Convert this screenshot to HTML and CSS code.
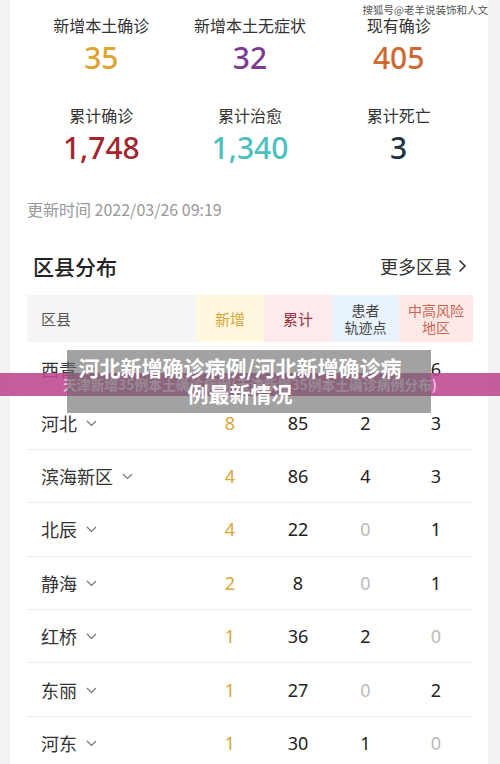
FILE: index.html
```html
<!DOCTYPE html>
<html lang="zh-CN">
<head>
<meta charset="utf-8">
<title>河北新增确诊病例</title>
<link rel="stylesheet" href="styles.css">
</head>
<body>
<div class="page">
  <div class="watermark">搜狐号@老羊说装饰和人文</div>
  <div class="card">
    <div class="stats">
      <div class="stat"><div class="label">新增本土确诊</div><div class="num c-gold">35</div></div>
      <div class="stat"><div class="label">新增本土无症状</div><div class="num c-purple">32</div></div>
      <div class="stat"><div class="label">现有确诊</div><div class="num c-orange">405</div></div>
      <div class="stat"><div class="label">累计确诊</div><div class="num c-red">1,748</div></div>
      <div class="stat"><div class="label">累计治愈</div><div class="num c-teal">1,340</div></div>
      <div class="stat"><div class="label">累计死亡</div><div class="num c-navy">3</div></div>
    </div>
    <div class="update">更新时间 2022/03/26 09:19</div>
    <div class="section-head">
      <div class="section-title">区县分布</div>
      <div class="more">更多区县 <svg class="more-arrow" width="9" height="14" viewBox="0 0 9 14"><polyline points="1.5,1.5 7,7 1.5,12.5" fill="none" stroke="#333" stroke-width="1.6"/></svg></div>
    </div>
    <div class="table">
      <div class="thead">
        <div class="th th-name">区县</div>
        <div class="th th-new">新增</div>
        <div class="th th-total">累计</div>
        <div class="th th-track">患者<br>轨迹点</div>
        <div class="th th-risk">中高风险<br>地区</div>
      </div>
      <div class="row">
        <div class="td name">西青<svg class="chev" width="11" height="7" viewBox="0 0 11 7"><polyline points="1,1 5.5,5.5 10,1" fill="none" stroke="#777" stroke-width="1.2"/></svg></div>
        <div class="td v-new"></div><div class="td"></div><div class="td"></div><div class="td">6</div>
      </div>
      <div class="row">
        <div class="td name">河北<svg class="chev" width="11" height="7" viewBox="0 0 11 7"><polyline points="1,1 5.5,5.5 10,1" fill="none" stroke="#777" stroke-width="1.2"/></svg></div>
        <div class="td v-new">8</div><div class="td">85</div><div class="td">2</div><div class="td">3</div>
      </div>
      <div class="row">
        <div class="td name">滨海新区<svg class="chev" width="11" height="7" viewBox="0 0 11 7"><polyline points="1,1 5.5,5.5 10,1" fill="none" stroke="#777" stroke-width="1.2"/></svg></div>
        <div class="td v-new">4</div><div class="td">86</div><div class="td">4</div><div class="td">3</div>
      </div>
      <div class="row">
        <div class="td name">北辰<svg class="chev" width="11" height="7" viewBox="0 0 11 7"><polyline points="1,1 5.5,5.5 10,1" fill="none" stroke="#777" stroke-width="1.2"/></svg></div>
        <div class="td v-new">4</div><div class="td">22</div><div class="td zero">0</div><div class="td">1</div>
      </div>
      <div class="row">
        <div class="td name">静海<svg class="chev" width="11" height="7" viewBox="0 0 11 7"><polyline points="1,1 5.5,5.5 10,1" fill="none" stroke="#777" stroke-width="1.2"/></svg></div>
        <div class="td v-new">2</div><div class="td">8</div><div class="td zero">0</div><div class="td">1</div>
      </div>
      <div class="row">
        <div class="td name">红桥<svg class="chev" width="11" height="7" viewBox="0 0 11 7"><polyline points="1,1 5.5,5.5 10,1" fill="none" stroke="#777" stroke-width="1.2"/></svg></div>
        <div class="td v-new">1</div><div class="td">36</div><div class="td">2</div><div class="td zero">0</div>
      </div>
      <div class="row">
        <div class="td name">东丽<svg class="chev" width="11" height="7" viewBox="0 0 11 7"><polyline points="1,1 5.5,5.5 10,1" fill="none" stroke="#777" stroke-width="1.2"/></svg></div>
        <div class="td v-new">1</div><div class="td">27</div><div class="td zero">0</div><div class="td">2</div>
      </div>
      <div class="row">
        <div class="td name">河东<svg class="chev" width="11" height="7" viewBox="0 0 11 7"><polyline points="1,1 5.5,5.5 10,1" fill="none" stroke="#777" stroke-width="1.2"/></svg></div>
        <div class="td v-new">1</div><div class="td">30</div><div class="td">1</div><div class="td zero">0</div>
      </div>
    </div>
  </div>
  <div class="band">天津新增35例本土确诊病例(天津新增35例本土确诊病例分布)</div>
  <div class="titlebox">河北新增确诊病例/河北新增确诊病<br>例最新情况</div>
</div>
</body>
</html>
```

FILE: styles.css
```css
* { box-sizing: border-box; }
html, body { margin: 0; padding: 0; }
body {
  background: #f3f3f3;
  font-family: "Noto Sans CJK SC", "Noto Sans", sans-serif;
  color: #333;
  width: 500px;
  height: 764px;
  overflow: hidden;
}
.page { position: relative; width: 500px; height: 764px; overflow: hidden; }
.card {
  margin: 0 12px 0 10px;
  background: #fff;
  padding: 14px 15px 0 17px;
  height: 800px;
}
.watermark {
  position: absolute;
  top: 4px;
  right: 12px;
  font-size: 10.5px;
  line-height: 12px;
  color: #555;
  z-index: 2;
}
.stats {
  display: grid;
  grid-template-columns: repeat(3, 1fr);
  row-gap: 28px;
}
.stat { display: flex; flex-direction: column; align-items: center; gap: 4px; }
.label { font-size: 16px; line-height: 22px; color: #333; }
.num {
  font-family: "Noto Sans", "Noto Sans CJK SC", sans-serif;
  font-size: 30px;
  line-height: 36px;
  font-weight: 500;
}
.c-gold { color: #e0a32e; }
.c-purple { color: #7a3d93; }
.c-orange { color: #cd6a31; }
.c-red { color: #a2252f; }
.c-teal { color: #4dbfbf; }
.c-navy { color: #1d3442; }
.update {
  margin-top: 33px;
  font-size: 16px;
  line-height: 20px;
  color: #999;
}
.section-head {
  margin-top: 33px;
  display: flex;
  justify-content: space-between;
  align-items: center;
  padding: 0 6px 0 6px;
  height: 28px;
}
.section-title { font-size: 21px; font-weight: 500; color: #222; }
.more { font-size: 18px; color: #333; display: flex; align-items: center; gap: 6px; }
.table { margin-top: 15px; }
.thead, .row {
  display: grid;
  grid-template-columns: 169px 68px 68px 67px 74px;
}
.thead { height: 47px; }
.th {
  display: flex;
  align-items: center;
  justify-content: center;
  text-align: center;
  font-size: 14px;
  line-height: 17px;
}
.th-name { justify-content: flex-start; padding-left: 14px; background: #f5f5f5; color: #555; font-size: 15px; }
.th-new { background: #fff7de; color: #d7a53a; font-size: 15px; }
.th-total { background: #fdeaec; color: #9c3443; font-size: 15px; }
.th-track { background: #e9f3fd; color: #444; }
.th-risk { background: #fde8e5; color: #cc6652; }
.row {
  height: 53.4px;
  border-top: 1px solid #eeeeee;
}
.thead + .row { border-top: none; }
.td {
  display: flex;
  align-items: center;
  justify-content: center;
  font-family: "Noto Sans", "Noto Sans CJK SC", sans-serif;
  font-size: 18px;
  color: #222;
}
.td.name {
  justify-content: flex-start;
  padding-left: 14px;
  font-family: "Noto Sans CJK SC", sans-serif;
  font-size: 18px;
  color: #333;
  gap: 9px;
}
.chev { margin-top: 1px; }
.v-new { color: #d9a639; }
.zero { color: #bbb; }
.band {
  position: absolute;
  left: 0;
  top: 373px;
  width: 500px;
  height: 23px;
  background: rgba(190, 72, 145, 0.88);
  color: rgba(255, 255, 255, 0.6);
  font-size: 13.8px;
  font-weight: 700;
  line-height: 23px;
  text-align: center;
  z-index: 3;
}
.titlebox {
  position: absolute;
  left: 67px;
  top: 350px;
  width: 364px;
  height: 63px;
  background: rgba(105, 105, 105, 0.62);
  color: #fff;
  font-size: 21px;
  font-weight: 700;
  line-height: 26px;
  text-align: center;
  padding: 4px 18px 0 0;
  z-index: 4;
}
```
